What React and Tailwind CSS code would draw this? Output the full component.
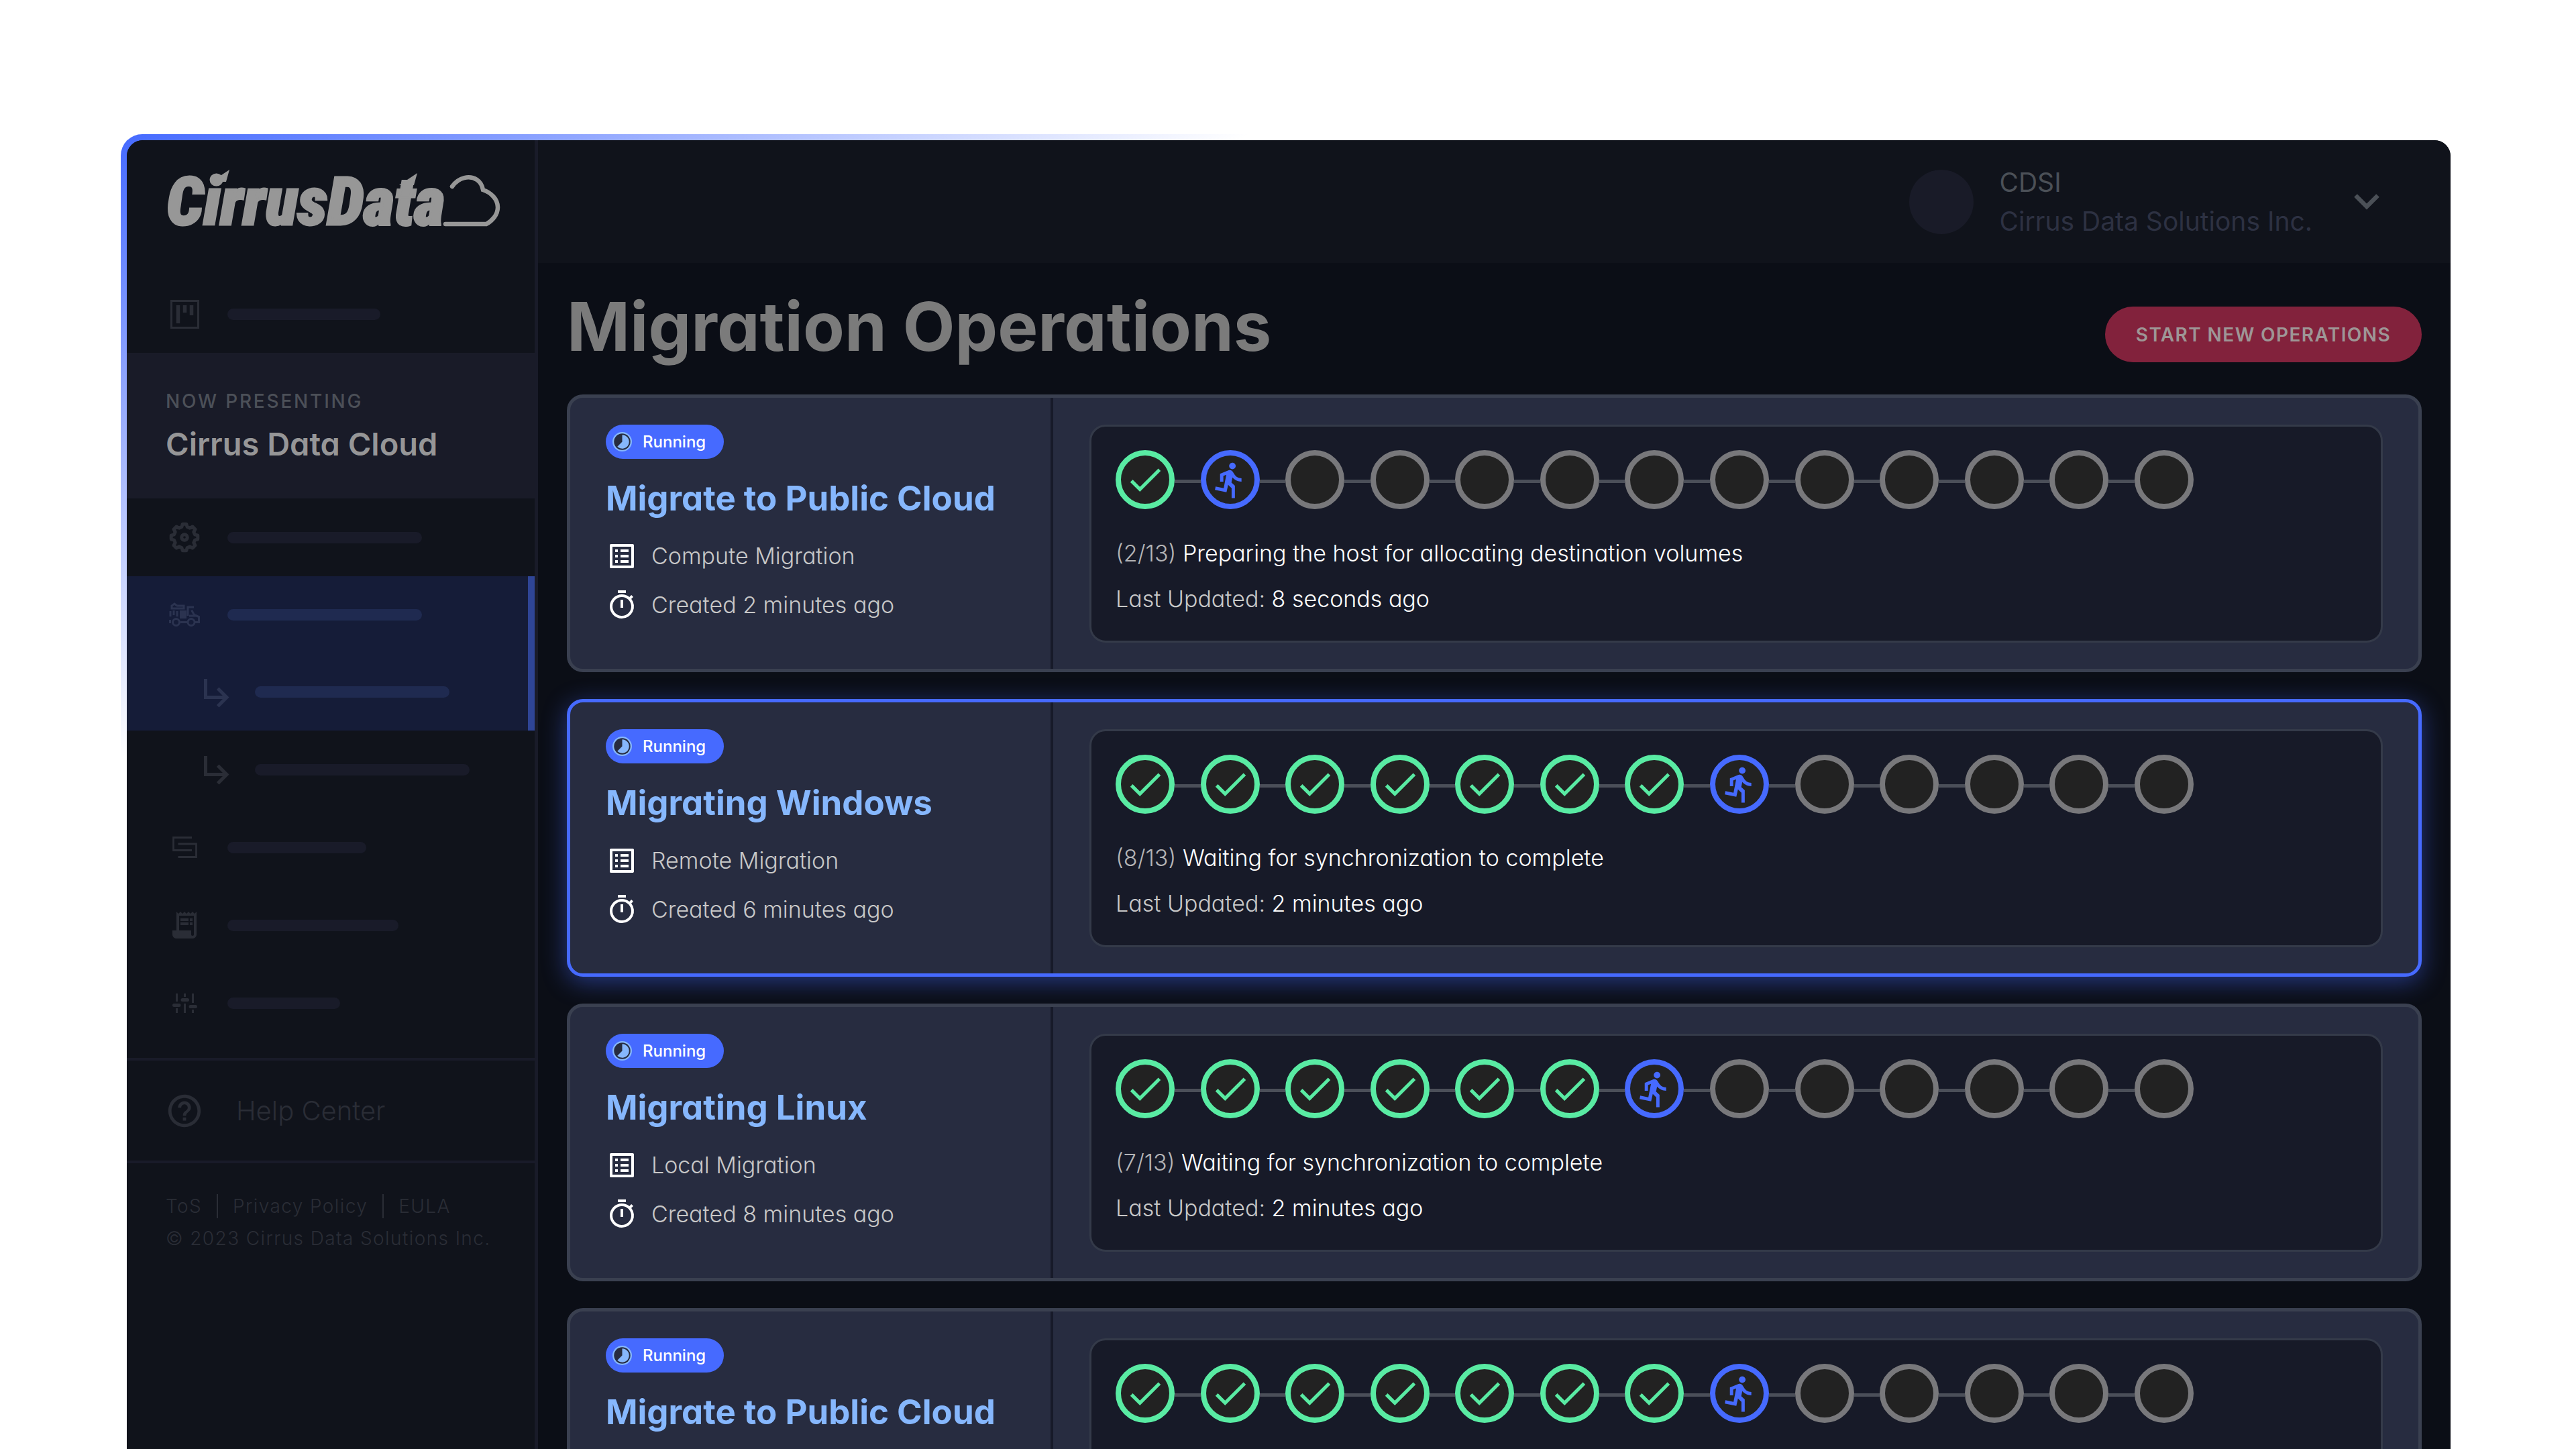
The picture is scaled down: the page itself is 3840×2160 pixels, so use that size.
import { MdCheck, MdDirectionsRun, MdHelpOutline, MdListAlt, MdOutlineTimer, MdReceiptLong, MdSubdirectoryArrowRight } from 'react-icons/md';

const TOTAL_STEPS = 13;

const OPERATIONS = [
  { id: 1, name: 'Migrate to Public Cloud', type: 'Compute Migration', created: '2 minutes ago', step: 2, message: 'Preparing the host for allocating destination volumes', updated: '8 seconds ago' },
  { id: 2, name: 'Migrating Windows', type: 'Remote Migration', created: '6 minutes ago', step: 8, message: 'Waiting for synchronization to complete', updated: '2 minutes ago', selected: true },
  { id: 3, name: 'Migrating Linux', type: 'Local Migration', created: '8 minutes ago', step: 7, message: 'Waiting for synchronization to complete', updated: '2 minutes ago' },
  { id: 4, name: 'Migrate to Public Cloud', step: 8 },
];

const STEP_STYLE = {
  done: 'border-[#59eba3] text-[#59eba3]',
  running: 'border-[#466aff] text-[#466aff]',
  pending: 'border-[#78787b]',
};

export default function App() {
  return (
    <div className="h-screen overflow-hidden bg-white pt-[200px] pl-[180px] pr-[187px] font-[Inter,sans-serif]">
      <div className="h-full rounded-t-[32px] bg-[linear-gradient(151deg,#456aff_0px,#ffffff_816px)] pt-[9px] pl-[9px]">
        <div className="flex h-full overflow-hidden rounded-t-3xl bg-[#0b0e16]">
          <Sidebar />
          <div className="flex-1 min-w-0">
            <TopBar />
            <main className="px-[43px] pt-10 [font-feature-settings:'cv11']">
              <div className="flex items-end justify-between mb-12">
                <h1 className="text-[101px] leading-[108px] font-bold text-[#7b7b7b]">Migration Operations</h1>
                <button className="h-[83px] rounded-full bg-[#82223c] px-[46px] text-[28px] font-semibold tracking-wider text-[#9e9696]">
                  START NEW OPERATIONS
                </button>
              </div>
              <div className="space-y-10">
                {OPERATIONS.map(op => <OperationCard key={op.id} op={op} />)}
              </div>
            </main>
          </div>
        </div>
      </div>
    </div>
  );
}

function Sidebar() {
  return (
    <aside className="w-[613px] shrink-0 border-r-[5px] border-[#191b29] bg-[#10131b] text-[#2a2d36]">
      <div className="h-[201px] pl-[61px] pt-10">
        <Logo />
      </div>
      <nav>
        <NavRow label="Dashboard" icon={<BoardIcon />} bar="w-[228px]" />
        <div className="h-[217px] bg-[#191b28] pt-[52px] pl-[58px]">
          <p className="text-[28px] leading-[40px] font-medium tracking-widest text-[#4c5058]">NOW PRESENTING</p>
          <p className="mt-5 text-[47px] leading-[48px] font-semibold text-[#969697] [font-feature-settings:'cv11']">Cirrus Data Cloud</p>
        </div>
        <NavRow label="Settings" icon={<GearIcon />} bar="w-[290px]" />
        <div className="border-r-[10px] border-[#2f4596] bg-[#151c38] text-[#2b3350]">
          <NavRow label="Migration" icon={<TruckIcon />} bar="w-[290px]" active />
          <NavRow label="Operations" icon={<MdSubdirectoryArrowRight size={60} />} bar="w-[290px]" active nested />
        </div>
        <NavRow label="Sessions" icon={<MdSubdirectoryArrowRight size={60} />} bar="w-[320px]" nested />
        <NavRow label="Deployments" icon={<LayersIcon />} bar="w-[207px]" />
        <NavRow label="Billing" icon={<MdReceiptLong size={48} />} bar="w-[255px]" />
        <NavRow label="Preferences" icon={<SlidersIcon />} bar="w-[168px]" />
      </nav>
      <a href="#help" className="mt-6 flex h-[157px] items-center gap-12 border-y-4 border-[#191b29] pl-[57px] text-[40px] font-light">
        <MdHelpOutline size={58} />
        <span>Help Center</span>
      </a>
      <div className="pt-10 pl-[58px] text-[28px] leading-[48px] font-[350] tracking-wider">
        <div className="flex items-center gap-[22px]">
          <a href="#tos">ToS</a>
          <span className="h-9 w-[2px] bg-[#2a2d36]" />
          <a href="#privacy">Privacy Policy</a>
          <span className="h-9 w-[2px] bg-[#2a2d36]" />
          <a href="#eula">EULA</a>
        </div>
        <p>© 2023 Cirrus Data Solutions Inc.</p>
      </div>
    </aside>
  );
}

function NavRow({ label, icon, bar, active, nested }) {
  return (
    <a
      href="#nav"
      aria-label={label}
      className={`flex items-center ${active ? 'h-[115px]' : 'h-[116px]'} ${nested ? 'gap-[26px] pl-[105px]' : 'gap-10 pl-[62px]'}`}
    >
      <span className={`flex justify-center ${nested ? 'w-[60px]' : 'w-12'}`}>{icon}</span>
      <span className={`h-[17px] rounded-full ${bar} ${active ? 'bg-[#1f2a50]' : 'bg-[#191b29]'}`} />
    </a>
  );
}

function TopBar() {
  return (
    <header className="flex h-[183px] items-center justify-end bg-[#10131b] pr-[106px]">
      <button className="flex items-center text-left text-[39px] leading-[58px]">
        <span className="size-24 rounded-full bg-[#191b28]" />
        <span className="ml-[38px]">
          <span className="block text-[#4b5057]">CDSI</span>
          <span className="block text-[#2d3142]">Cirrus Data Solutions Inc.</span>
        </span>
        <svg className="ml-[62px]" width="38" height="24" viewBox="0 0 38 24" fill="none" stroke="#4b5057" strokeWidth="6.5">
          <path d="M2.5 2.5 19 19 35.5 2.5" />
        </svg>
      </button>
    </header>
  );
}

function OperationCard({ op }) {
  return (
    <section
      className={`flex rounded-3xl border-[5px] bg-[#272c40] ${
        op.selected ? 'border-[#466aff] shadow-[0_8px_36px_rgba(70,106,255,0.46)]' : 'border-[#3a4050]'
      }`}
    >
      <div className="w-[720px] shrink-0 border-r-4 border-[#171a29] pl-[53px] pt-10">
        <span className="flex h-[51px] w-fit items-center gap-4 rounded-full bg-[#466aff] pl-[10px] pr-[27px] text-2xl font-medium [font-feature-settings:normal] text-white">
          <ProgressIcon />
          Running
        </span>
        <h2 className="mt-[27px] text-[51px] leading-[64px] font-bold text-[#86b7fd]">{op.name}</h2>
        {op.type && <Detail icon={<MdListAlt size={48} />} className="mt-[30px]">{op.type}</Detail>}
        {op.created && <Detail icon={<MdOutlineTimer size={48} />} className="mt-[25px]">Created {op.created}</Detail>}
      </div>
      <div className="flex-1 min-w-0 pt-10 pb-[39px] pr-[53px] pl-[54px]">
        <div className="min-h-[325px] rounded-3xl border-[3px] border-[#343a49] bg-[#171a28] px-9 pt-[35px] pb-7">
          <Steps current={op.step} />
          {op.message && (
            <div className="mt-8 text-[34px] leading-[68px] font-[350] text-white">
              <p><span className="font-light text-[#b4b4b6]">({op.step}/{TOTAL_STEPS})</span> {op.message}</p>
              <p><span className="font-light text-[#c8c8c8]">Last Updated:</span> {op.updated}</p>
            </div>
          )}
        </div>
      </div>
    </section>
  );
}

function Detail({ icon, className, children }) {
  return (
    <p className={`flex items-center gap-5 text-[34px] leading-[48px] font-light text-[#c8c8c8] ${className}`}>
      <span className="text-white">{icon}</span>
      {children}
    </p>
  );
}

function Steps({ current }) {
  const steps = Array.from({ length: TOTAL_STEPS }, (_, i) => i + 1);
  return (
    <ol className="flex max-w-[1607px] items-center">
      {steps.map(n => {
        const state = n < current ? 'done' : n === current ? 'running' : 'pending';
        return (
          <li key={n} className={`flex items-center ${n > 1 ? 'flex-1' : ''}`}>
            {n > 1 && <span className="mt-1 h-[5px] flex-1 bg-[#4b4f59]" />}
            <span className={`flex size-[88px] shrink-0 items-center justify-center rounded-full border-8 bg-[#222222] ${STEP_STYLE[state]}`}>
              {state === 'done' && <MdCheck size={62} />}
              {state === 'running' && <MdDirectionsRun size={59} />}
            </span>
          </li>
        );
      })}
    </ol>
  );
}

function ProgressIcon() {
  return (
    <svg width="29" height="29" viewBox="0 0 29 29">
      <circle cx="14.5" cy="14.5" r="14.5" fill="#86b7fd" />
      <circle cx="14.5" cy="14.5" r="12.2" fill="#272c40" />
      <path d="M14.5 14.5V4.3a10.2 10.2 0 1 1-7.2 17.4Z" fill="#86b7fd" />
    </svg>
  );
}

function Logo() {
  return (
    <svg width="500" height="120" viewBox="0 0 500 120" fill="#979797" role="img" aria-label="CirrusData" className="overflow-visible">
      <text
        x="-2"
        y="86"
        stroke="#979797"
        strokeWidth="3"
        className="font-['Roboto_Condensed','Open_Sans_Condensed',sans-serif] text-[100px] font-black italic"
      >
        CirrusData
      </text>
      <path d="M65 22 92 4 87 22Z" />
      <path d="M345 27 372 9 367 27Z" />
      <path
        d="M424 29C434 15 450 12 461 19c6 4 8 9 9 15 12 4 22 14 22 26 0 11-8 20-17 25H414"
        fill="none"
        stroke="#979797"
        strokeWidth="6.5"
        strokeLinecap="round"
      />
    </svg>
  );
}

function BoardIcon() {
  return (
    <svg width="43" height="43" viewBox="0 0 43 43" fill="none" stroke="currentColor">
      <rect x="1.5" y="1.5" width="40" height="40" strokeWidth="3" />
      <path d="M11.5 8v27M21.5 8v11M31.5 8v15" strokeWidth="5.5" />
    </svg>
  );
}

// eight blunt teeth around a small hub
const GEAR_POINTS = Array.from({ length: 8 }, (_, i) => {
  const base = (i * Math.PI) / 4;
  return [[-0.26, 16], [-0.14, 20], [0.14, 20], [0.26, 16]]
    .map(([a, r]) => `${23 + r * Math.sin(base + a)},${23 - r * Math.cos(base + a)}`)
    .join(' ');
}).join(' ');

function GearIcon() {
  return (
    <svg width="46" height="46" viewBox="0 0 46 46" fill="none" stroke="currentColor" strokeWidth="5" strokeLinejoin="round">
      <polygon points={GEAR_POINTS} />
      <circle cx="23" cy="23" r="4.3" />
    </svg>
  );
}

function TruckIcon() {
  return (
    <svg width="46" height="37" viewBox="0 0 46 37" fill="none" stroke="currentColor" strokeWidth="3">
      <circle cx="10.5" cy="29.5" r="5" />
      <circle cx="33" cy="29.5" r="5" />
      <path d="M17 29.5h10M1.5 31v-5M39 29.5h5.5v-8l-7-3-4-7M28 20V7h9" />
      <path d="M4 9V5l4-3 4 3h10v4ZM2 13v8M7 12v7M12 13v8" />
      <path d="M16 12h10v12H16Z" fill="currentColor" stroke="none" />
      <path d="M30 20h12" />
    </svg>
  );
}

function LayersIcon() {
  return (
    <svg width="37" height="32" viewBox="0 0 37 32" fill="none" stroke="currentColor" strokeWidth="2.8">
      <path d="M29 1.5H1.5v19H29M8.5 11h27v19.5h-27" />
    </svg>
  );
}

function SlidersIcon() {
  return (
    <svg width="37" height="29" viewBox="0 0 37 29" fill="none" stroke="currentColor" strokeWidth="3">
      <path d="M6.5 0v12M6.5 22v7M18.5 0v5M18.5 15v14M30.5 0v14M30.5 24v5" />
      <path d="M2.5 17.5h7.5M15 9.5h7.5M27 19.5h7.5" strokeWidth="5" strokeLinecap="round" />
    </svg>
  );
}
